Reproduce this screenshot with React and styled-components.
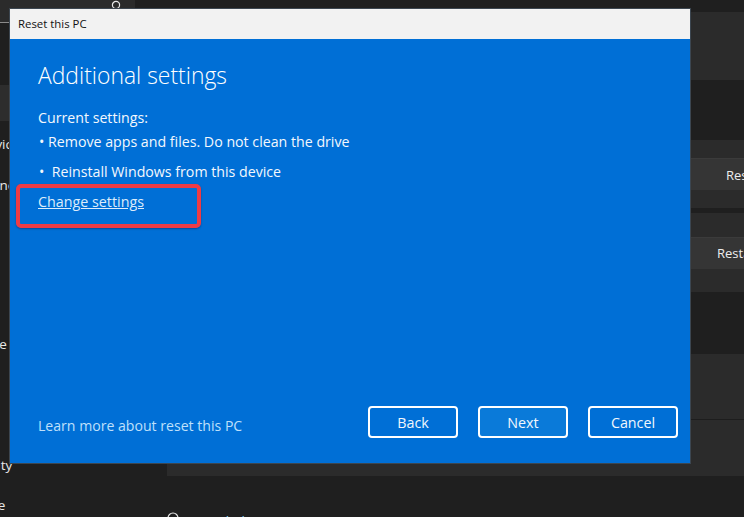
import React from "react";
import styled, { createGlobalStyle } from "styled-components";

const Global = createGlobalStyle`
  html, body { margin: 0; padding: 0; background: #1f1f1f; overflow: hidden; }
  #root { width: 744px; height: 517px; }
  * { box-sizing: border-box; }
`;
const Screen = styled.div`
  position: relative; width: 744px; height: 517px; overflow: hidden;
  display: grid; grid-template-columns: 167px 1fr; background: #1f1f1f;
  font-family: "Open Sans", "Noto Sans", sans-serif; color: #e8e8e8;
`;
const Sidebar = styled.div`
  display: flex; flex-direction: column; background: #1f1f1f;
`;
const SearchBox = styled.div`
  height: 23px; margin: 0 32px 0 0; background: #2b2b2b; border-bottom: 1px solid #8a8a8a;
  display: flex; justify-content: flex-end; align-items: flex-start; padding: 0 13px 0 0;
`;
const NavActive = styled.div`
  height: 36px; margin-top: 62px; background: #2d2d2d;
`;
const NavLabel = styled.div`
  height: ${p => p.$h}px; font-size: 13.5px; line-height: 18px; padding-top: ${p => p.$top}px; white-space: nowrap;
  text-indent: ${p => p.$indent}px; overflow: hidden;
`;
const Content = styled.div`display: flex; flex-direction: column; padding-top: 12px;`;
const Panel = styled.div`
  height: ${p => p.$h}px; margin-bottom: ${p => p.$gap}px; background: #2b2b2b;
  display: flex; flex-direction: column; justify-content: center; align-items: flex-end; overflow: hidden;
  border-bottom: ${p => p.$line ? "1px solid #1d1d1d" : "0"};
`;
const RowButton = styled.div`
  align-self: stretch; height: 32px; background: #353535; border-top: 1px solid #3b3b3b;
  display: flex; align-items: center; font-size: 13px; color: #ededed; padding-left: ${p => p.$pad}px; white-space: nowrap;
`;
const HelpRow = styled.div`
  display: flex; align-items: flex-start; gap: 21px; margin-top: 36px; font-size: 13.5px; line-height: 18px; color: #7fcdf0;
`;
const Dialog = styled.div`
  position: absolute; left: 9px; top: 8px; width: 682px; height: 456px;
  border: 1px solid #3c4650; display: flex; flex-direction: column; background: #006fd6;
`;
const TitleBar = styled.div`
  height: 30px; background: #f2f2f2; color: #111; font-size: 11.4px; line-height: 30px; padding-left: 8px;
`;
const Body = styled.div`
  flex: 1; padding: 19px 12px 0 28px; display: flex; flex-direction: column; color: #fff;
`;
const Heading = styled.h1`
  margin: 0; font-size: 22.9px; font-weight: 300; line-height: 36px; color: #fff;
`;
const Label = styled.div`
  font-size: 14.2px; line-height: 20px; margin-top: ${p => p.$mt}px; padding-left: ${p => p.$bullet ? 1 : 0}px;
  white-space: nowrap; color: #f4f8fd;
`;
const ChangeLink = styled.a`
  font-size: 14.3px; line-height: 20px; margin-top: 10px; color: #dcecfb; text-decoration: underline; align-self: flex-start;
`;
const Footer = styled.div`
  margin-top: auto; height: 73px; padding-top: 16px; display: flex; justify-content: space-between; align-items: flex-start;
`;
const Learn = styled.a`
  font-size: 14.1px; line-height: 20px; margin-top: 10px; color: #bfe0fb;
`;
const Buttons = styled.div`display: flex; gap: 20px;`;
const Btn = styled.button`
  width: 90px; height: 32px; border: 2px solid #fff; border-radius: 4px; padding: 0;
  background: ${p => p.$hot ? "#0a7ad9" : "#006fd6"}; color: #f2f7fd;
  font: 400 14.3px "Open Sans", "Noto Sans", sans-serif;
`;
const Callout = styled.div`
  position: absolute; left: 16px; top: 184px; width: 185px; height: 44px;
  border: 4px solid #ee3b45; border-radius: 5px; box-shadow: 0 1px 2px rgba(0,0,40,.35);
`;

export default function App() {
  return (
    <Screen>
      <Global />
      <Sidebar>
        <SearchBox>
          <svg width="12" height="12" viewBox="0 0 12 12" fill="none" stroke="#e8e8e8" strokeWidth="1.2">
            <circle cx="6" cy="5" r="3.6" />
          </svg>
        </SearchBox>
        <NavActive />
        <NavLabel $h={44} $top={14} $indent={-22}>Devices</NavLabel>
        <NavLabel $h={160} $top={11} $indent={-25}>Phone</NavLabel>
        <NavLabel $h={120} $top={10} $indent={-24}>Time</NavLabel>
        <NavLabel $h={40} $top={11} $indent={-38}>Security</NavLabel>
        <NavLabel $h={32} $top={11} $indent={-41}>Update</NavLabel>
      </Sidebar>
      <Content>
        <Panel $h={68} $gap={60} />
        <Panel $h={68} $gap={5}><RowButton $pad={559}>Reset</RowButton></Panel>
        <Panel $h={79} $gap={62}><RowButton $pad={550}>Restart</RowButton></Panel>
        <Panel $h={66} $gap={0} $line />
        <Panel $h={56} $gap={0} />
        <HelpRow>
          <svg width="12" height="12" viewBox="0 0 12 12" fill="none" stroke="#e8e8e8" strokeWidth="1.2">
            <circle cx="6" cy="6" r="5" />
          </svg>
          Get help
        </HelpRow>
      </Content>
      <Dialog>
        <TitleBar>Reset this PC</TitleBar>
        <Body>
          <Heading>Additional settings</Heading>
          <Label $mt={14}>Current settings:</Label>
          <Label $mt={4} $bullet>• Remove apps and files. Do not clean the drive</Label>
          <Label $mt={10} $bullet>•&nbsp; Reinstall Windows from this device</Label>
          <ChangeLink>Change settings</ChangeLink>
          <Footer>
            <Learn>Learn more about reset this PC</Learn>
            <Buttons>
              <Btn>Back</Btn>
              <Btn $hot>Next</Btn>
              <Btn>Cancel</Btn>
            </Buttons>
          </Footer>
        </Body>
      </Dialog>
      <Callout />
    </Screen>
  );
}
